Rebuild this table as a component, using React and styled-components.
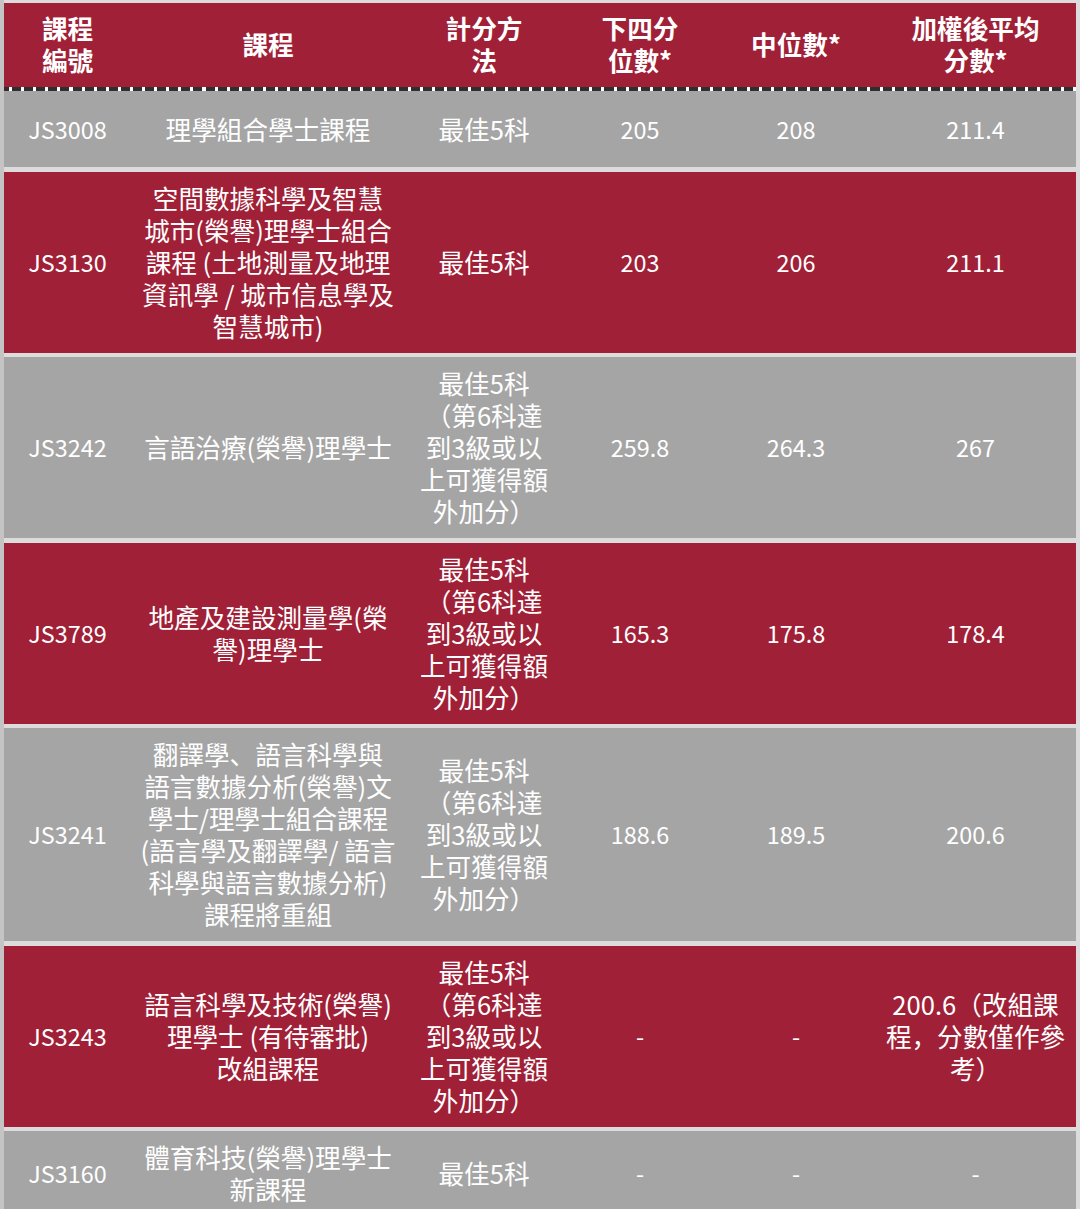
import React from 'react';
import styled, { createGlobalStyle } from 'styled-components';

const GlobalStyle = createGlobalStyle`
 html, body {
    margin: 0;
    padding: 0;
    background: #d6d6d6;
 }
 body {
    font-family: "Noto Sans CJK SC", "Noto Sans CJK TC", "Noto Sans", sans-serif;
 }
`;

const Page = styled.div`
 padding: 3px 4px 0 4px;
 background: linear-gradient(90deg, #c4c4c4 0 4px, #dcdcdc 4px);
 min-height: 1209px;
 box-sizing: border-box;
`;

const Table = styled.div`
 width: 1072px;
`;

const Body = styled.div`
 display: flex;
 flex-direction: column;
 gap: 4.5px;
`;

const cols = '127px 274px 158px 154px 158px 201px';

const HeaderRow = styled.div`
 display: grid;
 grid-template-columns: ${cols};
 background: #a02137;
 padding: 9px 0 11px;
 border-bottom: 4px solid transparent;
 border-image: repeating-linear-gradient(90deg, #2f2f2f 0 9px, #ffffff 9px 12px) 4;
`;

const Row = styled.div`
 display: grid;
 grid-template-columns: ${cols};
 background: ${(p) => (p.$red ? '#a02137' : '#a5a5a5')};
 padding: 10px 0 11px;
 min-height: 55px;
`;

const Cell = styled.div`
 display: flex;
 align-items: center;
 justify-content: center;
 text-align: center;
 white-space: pre;
 color: #ffffff;
 font-size: ${(p) => (p.$num ? '23.4px' : '25.6px')};
 line-height: 32px;
 font-weight: ${(p) => (p.$head ? 700 : 400)};
`;

const bonus = '最佳5科\n（第6科達\n到3級或以\n上可獲得額\n外加分）';

const headers = ['課程\n編號', '課程', '計分方\n法', '下四分\n位數*', '中位數*', '加權後平均\n分數*'];

const rows = [
 ['JS3008', '理學組合學士課程', '最佳5科', '205', '208', '211.4'],
 ['JS3130', '空間數據科學及智慧\n城市(榮譽)理學士組合\n課程 (土地測量及地理\n資訊學 / 城市信息學及\n智慧城市)', '最佳5科', '203', '206', '211.1'],
 ['JS3242', '言語治療(榮譽)理學士', bonus, '259.8', '264.3', '267'],
 ['JS3789', '地產及建設測量學(榮\n譽)理學士', bonus, '165.3', '175.8', '178.4'],
 ['JS3241', '翻譯學、語言科學與\n語言數據分析(榮譽)文\n學士/理學士組合課程\n(語言學及翻譯學/ 語言\n科學與語言數據分析)\n課程將重組', bonus, '188.6', '189.5', '200.6'],
 ['JS3243', '語言科學及技術(榮譽)\n理學士 (有待審批)\n改組課程', bonus, '-', '-', '200.6（改組課\n程，分數僅作參\n考）'],
 ['JS3160', '體育科技(榮譽)理學士\n新課程', '最佳5科', '-', '-', '-'],
];

const isNum = (s) => /^[\x20-\x7e]+$/.test(s);

export default function App() {
 return (
    <>
      <GlobalStyle />
      <Page>
        <Table>
          <HeaderRow>
            {headers.map((h, i) => (
              <Cell key={i} $head>{h}</Cell>
            ))}
          </HeaderRow>
          <Body>
            {rows.map((r, i) => (
              <Row key={r[0]} $red={i % 2 === 1}>
                {r.map((c, j) => (
                  <Cell key={j} $num={isNum(c)}>{c}</Cell>
                ))}
              </Row>
            ))}
          </Body>
        </Table>
      </Page>
    </>
 );
}
